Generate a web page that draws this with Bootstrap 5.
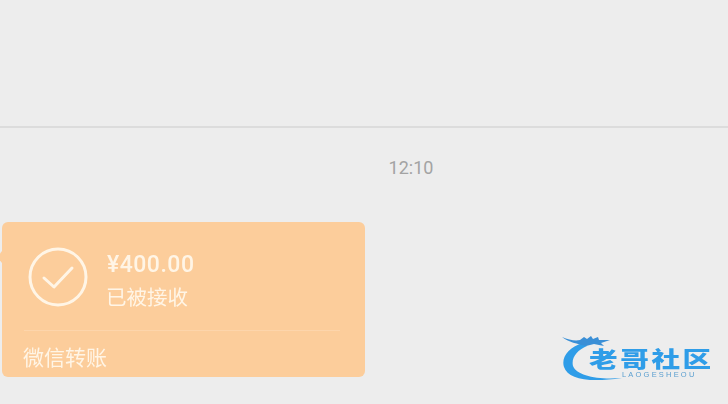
<!DOCTYPE html>
<html lang="en">
<head>
    <meta charset="UTF-8">
    <meta name="viewport" content="width=device-width, initial-scale=1.0">
    <title>Chat</title>
    <link href="https://cdn.jsdelivr.net/npm/bootstrap@5.3.0/dist/css/bootstrap.min.css" rel="stylesheet">
    <style>
        html, body {
            height: 100%;
        }
        body {
            background-color: #ededed;
            overflow: hidden;
            font-family: "Liberation Sans", "Noto Sans CJK SC", sans-serif;
        }
        .chat-top {
            height: 128px;
            border-bottom: 2px solid #dcdcdc;
        }
        .chat-time {
            padding: 28px 0 0 94px;
            height: 94px;
            color: #a3a3a3;
            font: 18px/24px Roboto, sans-serif;
            text-align: center;
        }
        .chat-row {
            padding: 0 0 0 2px;
        }
        .transfer {
            position: relative;
            width: 363px;
            height: 155px;
            background-color: #fccd9b;
            border-radius: 6px;
            color: #fff5e6;
            padding: 25px 22px 0 26px;
        }
        .transfer::before {
            content: "";
            position: absolute;
            left: -5px;
            top: 29px;
            border-top: 6px solid transparent;
            border-bottom: 6px solid transparent;
            border-right: 5px solid #fccd9b;
        }
        .transfer-body {
            filter: blur(.4px);
        }
        .transfer-text {
            margin-left: 3px;
            padding-top: 4px;
        }
        .transfer-amount {
            font: 500 23px/28px Roboto, sans-serif;
            letter-spacing: .5px;
        }
        .transfer-state {
            font: 400 20.5px/26px "Noto Sans CJK SC", sans-serif;
            margin: 4px 0 0 -1px;
        }
        .transfer-rule {
            margin: 21px 3px 0 -4px;
            border-top: 1px solid #fdd5ab;
        }
        .transfer-foot {
            margin: 12px 0 0 -5px;
            font: 400 21px/26px "Noto Sans CJK SC", sans-serif;
        }
        .logo-box {
            position: absolute;
            left: 560px;
            top: 334px;
            width: 154px;
            height: 48px;
            filter: blur(.4px);
        }
        .logo-name {
            position: absolute;
            left: 29px;
            top: 12px;
            color: #2f9de8;
            font: 900 22px/23px "Noto Sans CJK SC", sans-serif;
            letter-spacing: 2px;
            white-space: nowrap;
            transform: scaleX(1.3);
            transform-origin: left center;
        }
        .logo-sub {
            position: absolute;
            left: 62px;
            top: 36px;
            color: #5a9fd0;
            font: 400 7.5px/9px "Liberation Sans", sans-serif;
            letter-spacing: 2.2px;
            white-space: nowrap;
        }
    </style>
</head>
<body>
    <div class="chat-top"></div>
    <div class="chat-time">12:10</div>
    <div class="chat-row">
        <div class="transfer">
            <div class="transfer-body">
                <div class="d-flex align-items-start gap-3">
                    <svg width="60" height="60" viewBox="0 0 60 60" fill="none" stroke="#fff5e6" stroke-width="3">
                        <circle cx="30" cy="30" r="28"/>
                        <path d="M16 31 L26 40 L44 21" stroke-linecap="round" stroke-linejoin="round"/>
                    </svg>
                    <div class="transfer-text">
                        <div class="transfer-amount">¥400.00</div>
                        <div class="transfer-state">已被接收</div>
                    </div>
                </div>
                <div class="transfer-rule"></div>
                <div class="transfer-foot">微信转账</div>
            </div>
        </div>
    </div>
    <div class="logo-box">
        <svg width="70" height="48" viewBox="0 0 70 48">
            <path d="M23 9 C8 13 1 24 4 33 C8 45 28 49 62 44 C38 46 17 42 13 32 C11 24 17 16 27 12 Z" fill="#2f9de8"/>
            <path d="M2 3 C9 6 15 7 20 6 L24 3 L27 5 L31 2 L33 5 L38 3 L39 6 L50 6 L41 9 L44 12 L34 10 L26 12 C18 10 8 8 2 3 Z" fill="#3a8fd6"/>
        </svg>
        <div class="logo-name">老哥社区</div>
        <div class="logo-sub">LAOGESHEOU</div>
    </div>
    <script src="https://cdn.jsdelivr.net/npm/bootstrap@5.3.0/dist/js/bootstrap.bundle.min.js"></script>
</body>
</html>
